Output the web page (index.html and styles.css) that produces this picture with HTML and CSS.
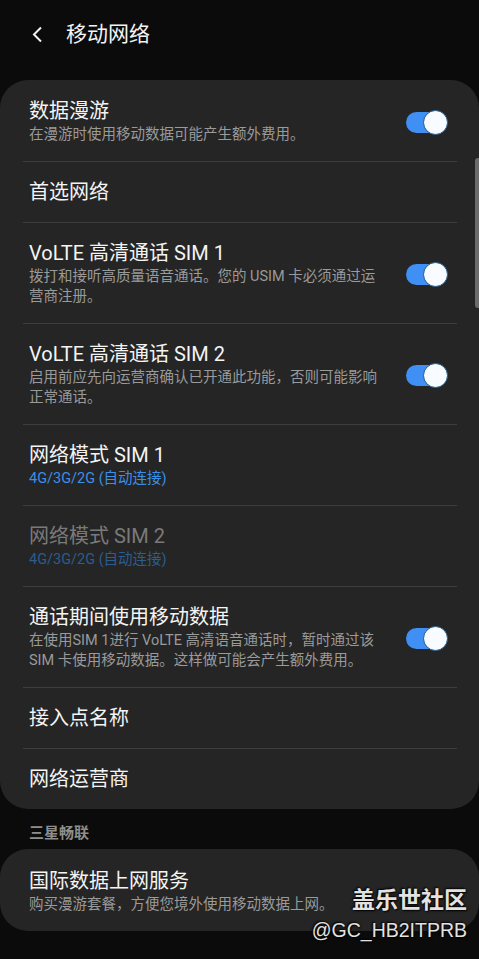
FILE: index.html
```html
<!DOCTYPE html>
<html lang="zh-CN">
  <head>
    <meta charset="UTF-8" />
    <meta name="viewport" content="width=device-width, initial-scale=1.0" />
    <title>移动网络</title>
    <link rel="stylesheet" href="styles.css">
  </head>
  <body>
    <div id="screen">
      <div id="header">
        <svg class="back" width="12" height="17" viewBox="0 0 12 17">
          <path d="M10 1.5 L3 8.5 L10 15.5" fill="none" stroke="#f2f2f2" stroke-width="2" />
        </svg>
        <span class="page-title">移动网络</span>
      </div>

      <div class="card">
        <div class="row">
          <div class="text">
            <div class="title">数据漫游</div>
            <div class="sub">在漫游时使用移动数据可能产生额外费用。</div>
          </div>
          <div class="switch"><span class="knob"></span></div>
        </div>
        <div class="row single">
          <div class="text">
            <div class="title">首选网络</div>
          </div>
        </div>
        <div class="row">
          <div class="text">
            <div class="title">VoLTE 高清通话 SIM 1</div>
            <div class="sub">拨打和接听高质量语音通话。您的 USIM 卡必须通过运营商注册。</div>
          </div>
          <div class="switch"><span class="knob"></span></div>
        </div>
        <div class="row">
          <div class="text">
            <div class="title">VoLTE 高清通话 SIM 2</div>
            <div class="sub">启用前应先向运营商确认已开通此功能，否则可能影响正常通话。</div>
          </div>
          <div class="switch"><span class="knob"></span></div>
        </div>
        <div class="row">
          <div class="text">
            <div class="title">网络模式 SIM 1</div>
            <div class="sub blue">4G/3G/2G (自动连接)</div>
          </div>
        </div>
        <div class="row disabled">
          <div class="text">
            <div class="title">网络模式 SIM 2</div>
            <div class="sub blue">4G/3G/2G (自动连接)</div>
          </div>
        </div>
        <div class="row">
          <div class="text">
            <div class="title">通话期间使用移动数据</div>
            <div class="sub">在使用SIM 1进行 VoLTE 高清语音通话时，暂时通过该SIM 卡使用移动数据。这样做可能会产生额外费用。</div>
          </div>
          <div class="switch"><span class="knob"></span></div>
        </div>
        <div class="row single">
          <div class="text">
            <div class="title">接入点名称</div>
          </div>
        </div>
        <div class="row single">
          <div class="text">
            <div class="title">网络运营商</div>
          </div>
        </div>
      </div>

      <div class="section-label">三星畅联</div>

      <div class="card last">
        <div class="row">
          <div class="text">
            <div class="title">国际数据上网服务</div>
            <div class="sub">购买漫游套餐，方便您境外使用移动数据上网。</div>
          </div>
        </div>
      </div>

      <div class="scrollbar"></div>

      <div class="watermark">
        <div class="wm-name">盖乐世社区</div>
        <div class="wm-id">@GC_HB2ITPRB</div>
      </div>
    </div>
  </body>
</html>
```

FILE: styles.css
```css
body {
  margin: 0;
  background-color: #0b0b0b;
  font-family: Roboto, "Noto Sans CJK SC", sans-serif;
  color: #f4f4f4;
}
#screen {
  position: relative;
  width: 479px;
  height: 959px;
  overflow: hidden;
}
#header {
  display: flex;
  align-items: center;
  height: 68px;
  padding-left: 31px;
}
.back {
  margin-right: 23px;
}
.page-title {
  font-size: 21px;
  line-height: 28px;
}
.card {
  margin-top: 12px;
  padding: 1px 22px 0 23px;
  background-color: #252525;
  border-radius: 28px;
}
.card.last {
  margin-top: 0;
  padding-top: 2px;
}
.row {
  display: flex;
  align-items: center;
  padding: 18px 9px 16px 6px;
  border-top: 1px solid #3e3e3e;
}
.row:first-child {
  border-top: none;
}
.row.single {
  padding-bottom: 18px;
}
.text {
  flex: 1;
  margin-right: 18px;
}
.title {
  font-size: 20px;
  line-height: 24px;
}
.sub {
  margin-top: 2px;
  font-size: 14.5px;
  line-height: 20px;
  color: #9a9a9a;
}
.sub.blue {
  color: #3b8fe8;
}
.disabled .title {
  color: #7a7a7a;
}
.disabled .sub.blue {
  color: #2b5d8e;
}
.switch {
  position: relative;
  width: 42px;
  height: 25px;
}
.switch::before {
  content: "";
  position: absolute;
  left: 0;
  top: 2px;
  width: 40px;
  height: 21px;
  border-radius: 11px;
  background-color: #3f8ff5;
}
.knob {
  position: absolute;
  right: 0;
  top: 0;
  width: 23px;
  height: 23px;
  border-radius: 50%;
  background-color: #f8fbff;
  border: 1px solid #1f5886;
}
.section-label {
  padding: 14px 0 6px 29px;
  font-size: 15px;
  line-height: 20px;
  font-weight: bold;
  color: #8e8e8e;
}
.scrollbar {
  position: absolute;
  right: 0;
  top: 158px;
  width: 4px;
  height: 150px;
  border-radius: 3px 0 0 3px;
  background-color: #6b6b6b;
}
.watermark {
  position: absolute;
  right: 12px;
  top: 886px;
  text-align: right;
  color: #e2e2e2;
  text-shadow: 1px 1px 2px #000, -1px -1px 2px #000;
}
.wm-name {
  font-size: 23px;
  line-height: 30px;
  font-weight: bold;
}
.wm-id {
  font-family: "Liberation Sans", sans-serif;
  font-size: 19.5px;
  line-height: 28px;
}
```
